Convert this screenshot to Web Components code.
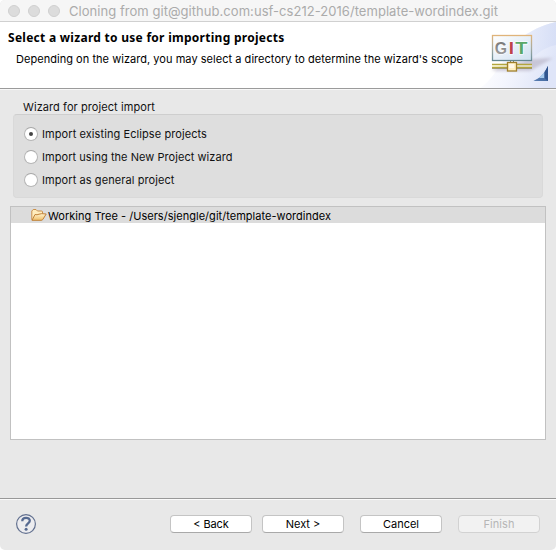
<!DOCTYPE html>
<html lang="en">
<head>
<meta charset="utf-8">
<title>Cloning from git</title>
<style>
html,body{margin:0;background:#fff;overflow:hidden}
</style>
</head>
<body>
<wizard-window></wizard-window>
<script>
const define = (name, html) => {
  const template = document.createElement('template');
  template.innerHTML = html;
  customElements.define(name, class extends HTMLElement {
    connectedCallback() {
      if (this.shadowRoot) return;
      this.attachShadow({mode: 'open'}).append(template.content.cloneNode(true));
    }
  });
};

// A one-line label whose tracking is set so that it spans data-w pixels.
customElements.define('text-line', class extends HTMLElement {
  connectedCallback() {
    if (this.shadowRoot) return;
    const root = this.attachShadow({mode: 'open'});
    root.innerHTML = `<style>:host{display:block;white-space:nowrap;flex:none}span{display:inline-block}</style><span><slot></slot></span>`;
    const want = +this.dataset.w, n = this.textContent.length;
    const span = root.querySelector('span');
    if (want) span.style.letterSpacing = ((want - span.getBoundingClientRect().width) / n).toFixed(4) + 'px';
  }
});

define('title-bar', `<style>
:host{display:flex;align-items:center;height:21px;box-sizing:content-box;border-bottom:1px solid #d0d0d0;background:#f6f6f6;padding-left:8px;font-size:13px;line-height:21px;color:#ababab}
i{width:10px;height:10px;border:1px solid #cfcfcf;border-radius:50%;background:#dcdcdc;margin-right:8px}
text-line{margin-left:1px;padding-top:2px}
</style><i></i><i></i><i></i><text-line data-w="429">Cloning from git@github.com:usf-cs212-2016/template-wordindex.git</text-line>`);

define('git-banner', `<style>:host{display:block;width:76px;height:66px}svg{display:block}</style>
<svg width="76" height="66" viewBox="0 0 76 66">
<defs>
<linearGradient id="a" x1="0" y1=".2" x2="1" y2=".5"><stop offset=".1" stop-color="#fff"/><stop offset=".5" stop-color="#f3f5fd"/><stop offset="1" stop-color="#dfe5f8"/></linearGradient>
<linearGradient id="t" x1="0" y1="0" x2="1" y2="0"><stop stop-color="#e9edfb"/><stop offset="1" stop-color="#d3dcf5"/></linearGradient>
<linearGradient id="b" x1="0" y1="0" x2="1" y2="1"><stop stop-color="#fff"/><stop offset="1" stop-color="#cfe0f1"/></linearGradient>
<linearGradient id="c" x1="0" y1="0" x2="0" y2="1"><stop stop-color="#e0b47a"/><stop offset=".5" stop-color="#a7aaa0"/><stop offset="1" stop-color="#6a8f9b"/></linearGradient>
<linearGradient id="d" x1="0" y1="0" x2="1" y2="0"><stop stop-color="#a9bfe0"/><stop offset=".5" stop-color="#5e88c2"/><stop offset="1" stop-color="#34568f"/></linearGradient>
<linearGradient id="g" x1="0" y1="0" x2="0" y2="1"><stop stop-color="#707070"/><stop offset="1" stop-color="#a8a8a8"/></linearGradient>
<filter id="s" x="-20%" y="-60%" width="140%" height="220%"><feGaussianBlur stdDeviation="1.6"/></filter>
</defs>
<path d="M0 66C12 58 19 44 32 27C45 11 58 4 76 0V66Z" fill="url(#a)"/>
<path d="M38 18C50 9 62 3 76 0V23C62 26 53 34 46 44C43 40 40 30 38 18Z" fill="url(#t)" opacity=".75"/>
<path d="M12 47L52 37L73 36L50 49H14Z" fill="#a9a1b5" opacity=".5" filter="url(#s)"/>
<rect x="12.5" y="13.5" width="39" height="25" fill="url(#b)" stroke="url(#c)" stroke-width="1.3"/>
<path d="M12 38.5H52" stroke="#64868f"/>
<g font-family="Liberation Sans,Arial,sans-serif" font-weight="700" font-size="17" stroke="#fff" stroke-width="1.2" stroke-linejoin="round" paint-order="stroke"><text x="14.7" y="32" fill="url(#g)" textLength="12.3" lengthAdjust="spacingAndGlyphs">G</text><text x="28.8" y="32" fill="#bd4349" textLength="5.2" lengthAdjust="spacingAndGlyphs">I</text><text x="35.2" y="32" fill="#5aa868" textLength="12.2" lengthAdjust="spacingAndGlyphs">T</text></g>
<path d="M30.5 39v3M33.5 39v3" stroke="#7c8865"/>
<path d="M12 42.5H52M12 45.5H52" stroke="#b3a53d" stroke-width="1.4"/><path d="M12 44H52" stroke="#f6f0b5"/><path d="M12 46.5H52" stroke="#8e8650" stroke-width=".7"/>
<rect x="27.5" y="40.5" width="9" height="8.5" fill="#fff0bf" stroke="#a0802c" stroke-width="1.3"/><rect x="29" y="42" width="5" height="4" fill="#fff8e8"/>
<path d="M53.5 59C60 56 65 51 68 44V59Z" fill="url(#d)"/><path d="M59 56L64.5 50V56Z" fill="#a5c9ec"/><path d="M68 44L64.5 50V56L68 59Z" fill="#31558f"/><path d="M53.5 59L59 56H64.5L68 59Z" fill="#4a6fa5" opacity=".8"/>
</svg>`);

define('wizard-header', `<style>
:host{display:flex;justify-content:space-between;height:66px;background:#fff;border-bottom:1px solid #9b9b9b;box-shadow:0 1px #f8f8f8;color:#000}
section{padding-left:8px}
.h{font:700 12px/16px "Noto Sans","Open Sans",sans-serif;padding-top:8px}
.d{padding:5px 0 0 8px;line-height:16px}
</style><section><text-line class="h" data-w="276.5">Select a wizard to use for importing projects</text-line>
<text-line class="d" data-w="447">Depending on the wizard, you may select a directory to determine the wizard's scope</text-line></section><git-banner></git-banner>`);

define('radio-option', `<style>
:host{display:flex;flex:none;align-items:center;height:23px;gap:4px}
i{box-sizing:border-box;width:14px;height:14px;border:1px solid #b5b5b5;border-top-color:#a6a6a6;border-radius:50%;background:#fff;display:grid;place-items:center}
:host([checked]) i::after{content:"";width:4px;height:4px;border-radius:50%;background:#444}
</style><i></i><slot></slot>`);

define('group-box', `<style>
:host{display:block;height:107px;padding:10px 13px 0;box-sizing:border-box}
.l{padding-left:10px;height:15px}
.b{box-sizing:border-box;height:84px;background:#dedede;border:1px solid #d9d9d9;border-top-color:#cecece;border-radius:4px;padding:7px 10px 0;display:flex;flex-direction:column}
</style><text-line class="l" data-w="132">Wizard for project import</text-line><div class="b"><slot></slot></div>`);

define('project-tree', `<style>
:host{display:block;box-sizing:border-box;width:536px;height:234px;margin:10px 0 0 10px;background:#fff;border:1px solid #c1c1c1}
div{display:flex;align-items:center;height:16px;background:#dcdcdc;padding-left:20px;color:#000}
svg{margin-right:1px;flex:none}
text-line{line-height:18px}
</style><div><svg width="16" height="14" viewBox="0 0 16 14"><defs><linearGradient id="f" x2="0" y2="1"><stop stop-color="#fff3cf"/><stop offset="1" stop-color="#f0c069"/></linearGradient></defs><path d="M.8 11.8V3L2.2 1.5H5L6.5 3H10.5Q11.5 3 11.5 4V5.5" fill="#ffedbd" stroke="#c98f4a"/><path d="M1 12.3L4 6.5Q6 7.2 8 6.2Q10 5.2 15.2 6L11.8 11.5Q11.3 12.3 10 12.3Z" fill="url(#f)" stroke="#c08138"/></svg><text-line style="padding-top:2px" data-w="283">Working Tree - /Users/sjengle/git/template-wordindex</text-line></div>`);

define('push-button', `<style>
:host{display:flex;justify-content:center;box-sizing:border-box;width:82px;height:18px;border:1px solid #c4c4c4;border-bottom-color:#a9a9a9;border-radius:4px;background:#fff;color:#000;line-height:17px}
:host([disabled]){background:#f2f2f2;border-color:#d2d2d2;color:#b6b6b6}
</style><slot></slot>`);

define('help-button', `<style>:host{display:block;width:22px;height:22px}svg{display:block}</style>
<svg width="22" height="22" viewBox="0 0 22 22"><circle cx="11" cy="11" r="9.4" fill="#ececef" stroke="#62708f" stroke-width="1.2"/><path d="M7.3 8.2C7.2 3.8 14.9 3.8 14.8 7.8C14.8 10.4 11.1 10.5 11.1 13.6" fill="none" stroke="#566a91" stroke-width="2.3"/><circle cx="11.1" cy="16.3" r="1.5" fill="#566a91"/></svg>`);

define('button-bar', `<style>
:host{display:flex;align-items:flex-start;box-sizing:border-box;height:52px;margin-top:auto;border-top:1px solid #989898;box-shadow:inset 0 1px #fafafa;padding:16px 16px 0 15px}
help-button{margin-top:-2px;margin-right:auto}
.n{margin:0 16px 0 10px}.f{margin-left:16px}
</style><help-button></help-button>
<push-button><text-line data-w="35.5">&lt; Back</text-line></push-button><push-button class="n"><text-line data-w="34.5">Next &gt;</text-line></push-button><push-button><text-line data-w="36">Cancel</text-line></push-button><push-button class="f" disabled><text-line data-w="31">Finish</text-line></push-button>`);

define('wizard-window', `<style>
:host{display:flex;flex-direction:column;width:556px;height:550px;background:#e8e8e8;border-radius:5px;overflow:hidden;font:11px/16px Inter,"Liberation Sans",sans-serif;color:#111}
</style>
<title-bar></title-bar><wizard-header></wizard-header>
<group-box>
<radio-option checked><text-line data-w="165">Import existing Eclipse projects</text-line></radio-option>
<radio-option><text-line data-w="190.5">Import using the New Project wizard</text-line></radio-option>
<radio-option><text-line data-w="132.5">Import as general project</text-line></radio-option>
</group-box>
<project-tree></project-tree><button-bar></button-bar>`);
</script>
</body>
</html>
